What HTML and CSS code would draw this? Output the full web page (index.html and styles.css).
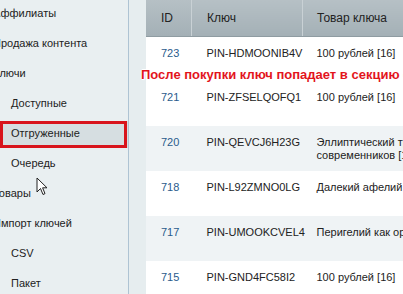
FILE: index.html
```html
<!DOCTYPE html>
<html lang="ru">
<head>
  <meta charset="UTF-8">
  <title>Ключи · Отгруженные</title>
  <link rel="stylesheet" href="styles.css">
</head>
<body>
  <div class="page">
    <ul class="nav">
      <li class="top">Аффилиаты</li>
      <li class="top">Продажа контента</li>
      <li class="top">Ключи</li>
      <li class="sub">Доступные</li>
      <li class="sub active">Отгруженные</li>
      <li class="sub">Очередь</li>
      <li class="top">Товары</li>
      <li class="top">Импорт ключей</li>
      <li class="sub">CSV</li>
      <li class="sub">Пакет</li>
    </ul>
    <div class="mark"></div>
    <svg class="cursor" width="12" height="19" viewBox="0 0 12 19">
      <path d="M1 1 L1 15 L4.5 11.5 L7 17.5 L9 16.6 L6.6 10.8 L11 10.8 Z" fill="#fff" stroke="#222" stroke-width="1"/>
    </svg>

    <div class="gutter"></div>

    <div class="main">
      <table class="keys">
        <thead>
          <tr><th class="c-id">ID</th><th class="c-key">Ключ</th><th class="c-item">Товар ключа</th></tr>
        </thead>
        <tbody>
          <tr><td class="id">723</td><td>PIN-HDMOONIB4V</td><td>100 рублей [16]</td></tr>
          <tr><td class="id">721</td><td>PIN-ZFSELQOFQ1</td><td>100 рублей [16]</td></tr>
          <tr class="alt"><td class="id">720</td><td>PIN-QEVCJ6H23G</td><td>Эллиптический тренд современников [16]</td></tr>
          <tr><td class="id">718</td><td>PIN-L92ZMNO0LG</td><td>Далекий афелий 2 [16]</td></tr>
          <tr class="alt"><td class="id">717</td><td>PIN-UMOOKCVEL4</td><td>Перигелий как орбита [16]</td></tr>
          <tr><td class="id">715</td><td>PIN-GND4FC58I2</td><td>100 рублей [16]</td></tr>
        </tbody>
      </table>
      <div class="note">После покупки ключ попадает в секцию отгруженных</div>
    </div>
  </div>
</body>
</html>
```

FILE: styles.css
```css
body { margin: 0; font-family: "Liberation Sans", Arial, sans-serif; font-size: 11px; color: #222; background: #e8eef0; overflow: hidden; }
.page { position: relative; display: flex; width: 403px; height: 294px; overflow: hidden; }

.nav { list-style: none; margin: -2px 0 0; padding: 0; width: 128px; flex: none; border-right: 1px solid #aec3d3; box-shadow: 1px 0 0 #f7fafb; background: #e9eff1; overflow: hidden; }
.nav li { height: 30px; line-height: 30px; white-space: nowrap; }
.nav .top { margin-left: -7px; }
.nav .sub { padding-left: 11px; }
.nav .active { background: linear-gradient(#e9eff1 3px, #d6dee1 3px); }
.mark { position: absolute; left: 0; top: 121px; width: 121px; height: 21px; border: 3px solid #d8141c; }
.cursor { position: absolute; left: 36px; top: 177px; }

.gutter { width: 17px; flex: none; background: #e6edef; }

.main { position: relative; flex: none; background: #fff; }
.keys { border-collapse: collapse; table-layout: fixed; width: 330px; }
.keys thead tr { height: 36px; }
.keys tbody tr { height: 45px; }
.keys th { padding: 0 0 0 15px; text-align: left; font-weight: normal; font-size: 12px; background: linear-gradient(#b6c0c5, #a4b0b6); border-bottom: 1px solid #8f9ca2; border-left: 1px solid #c9d1d5; }
.keys th:first-child { border-left: none; }
.keys th:last-child { padding-left: 14px; }
.c-id { width: 30px; }
.c-key { width: 95px; }
.c-item { width: 160px; }
.keys td { padding: 10px 0 0 15px; vertical-align: top; line-height: 13px; background: #fff; white-space: nowrap; }
.keys td:last-child { padding-left: 14px; white-space: normal; }
.keys .alt td { background: #eff3f5; }
.keys .id { color: #2a5b8c; }

.note { position: absolute; left: -5px; top: 67px; white-space: nowrap; color: #e3141c; font-weight: bold; font-size: 13px; text-shadow: 1px 0 0 #fff, -1px 0 0 #fff, 0 1px 0 #fff, 0 -1px 0 #fff, 1px 1px 1px #fff; }
```
